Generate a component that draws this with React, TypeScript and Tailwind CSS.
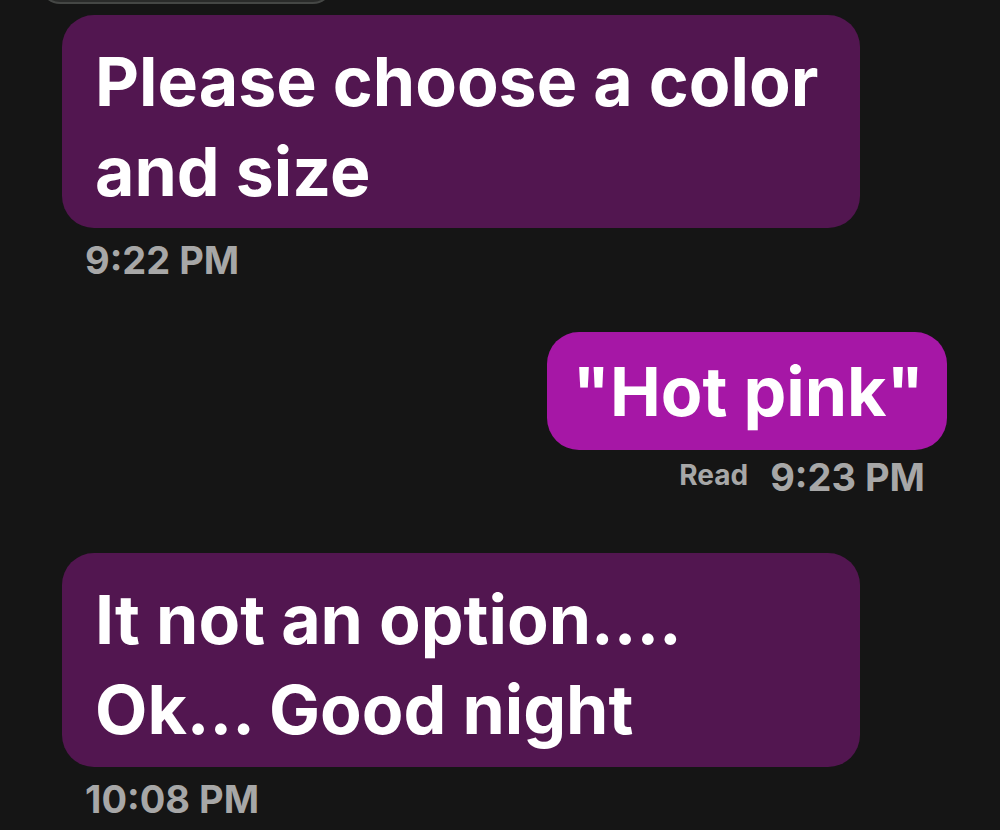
import React from "react";

const font = { fontFamily: "Inter, Roboto, 'Noto Sans', sans-serif" };

export default function App() {
  return (
    <div className="w-[1000px] h-[830px] bg-[#151515] overflow-hidden flex flex-col" style={font}>
      <div className="ml-[40px] w-[293px] h-[40px] -mt-[36px] rounded-[22px] bg-[#2a2b2a] border-2 border-[#454745] shrink-0" />
      <div className="ml-[62px] mt-[11px] w-[798px] h-[213px] rounded-[32px] bg-[#521650] pl-[33px] pt-[21px] shrink-0">
        <p className="text-white font-bold text-[68px] leading-[90px]">
          Please choose a color
          <br />
          and size
        </p>
      </div>
      <div className="ml-[85px] mt-[12px] text-[#a7a7a7] font-bold text-[38px] leading-[40px]">9:22 PM</div>
      <div className="self-end mr-[53px] mt-[52px] h-[118px] rounded-[32px] bg-[#a617a6] pl-[25px] pr-[23px] flex items-center shrink-0">
        <span className="text-white font-bold text-[68px] leading-[80px]">"Hot pink"</span>
      </div>
      <div className="self-end mr-[75px] mt-[6px] flex items-end gap-[22px] text-[#a7a7a7] font-bold">
        <span className="text-[28px] leading-[34px] mb-[6px]">Read</span>
        <span className="text-[38px] leading-[42px]">9:23 PM</span>
      </div>
      <div className="ml-[62px] mt-[55px] w-[798px] h-[214px] rounded-[32px] bg-[#521650] pl-[33px] pt-[21px] shrink-0">
        <p className="text-white font-bold text-[68px] leading-[90px]">
          It not an option....
          <br />
          Ok... Good night
        </p>
      </div>
      <div className="ml-[85px] mt-[12px] text-[#a7a7a7] font-bold text-[38px] leading-[40px]">10:08 PM</div>
    </div>
  );
}
